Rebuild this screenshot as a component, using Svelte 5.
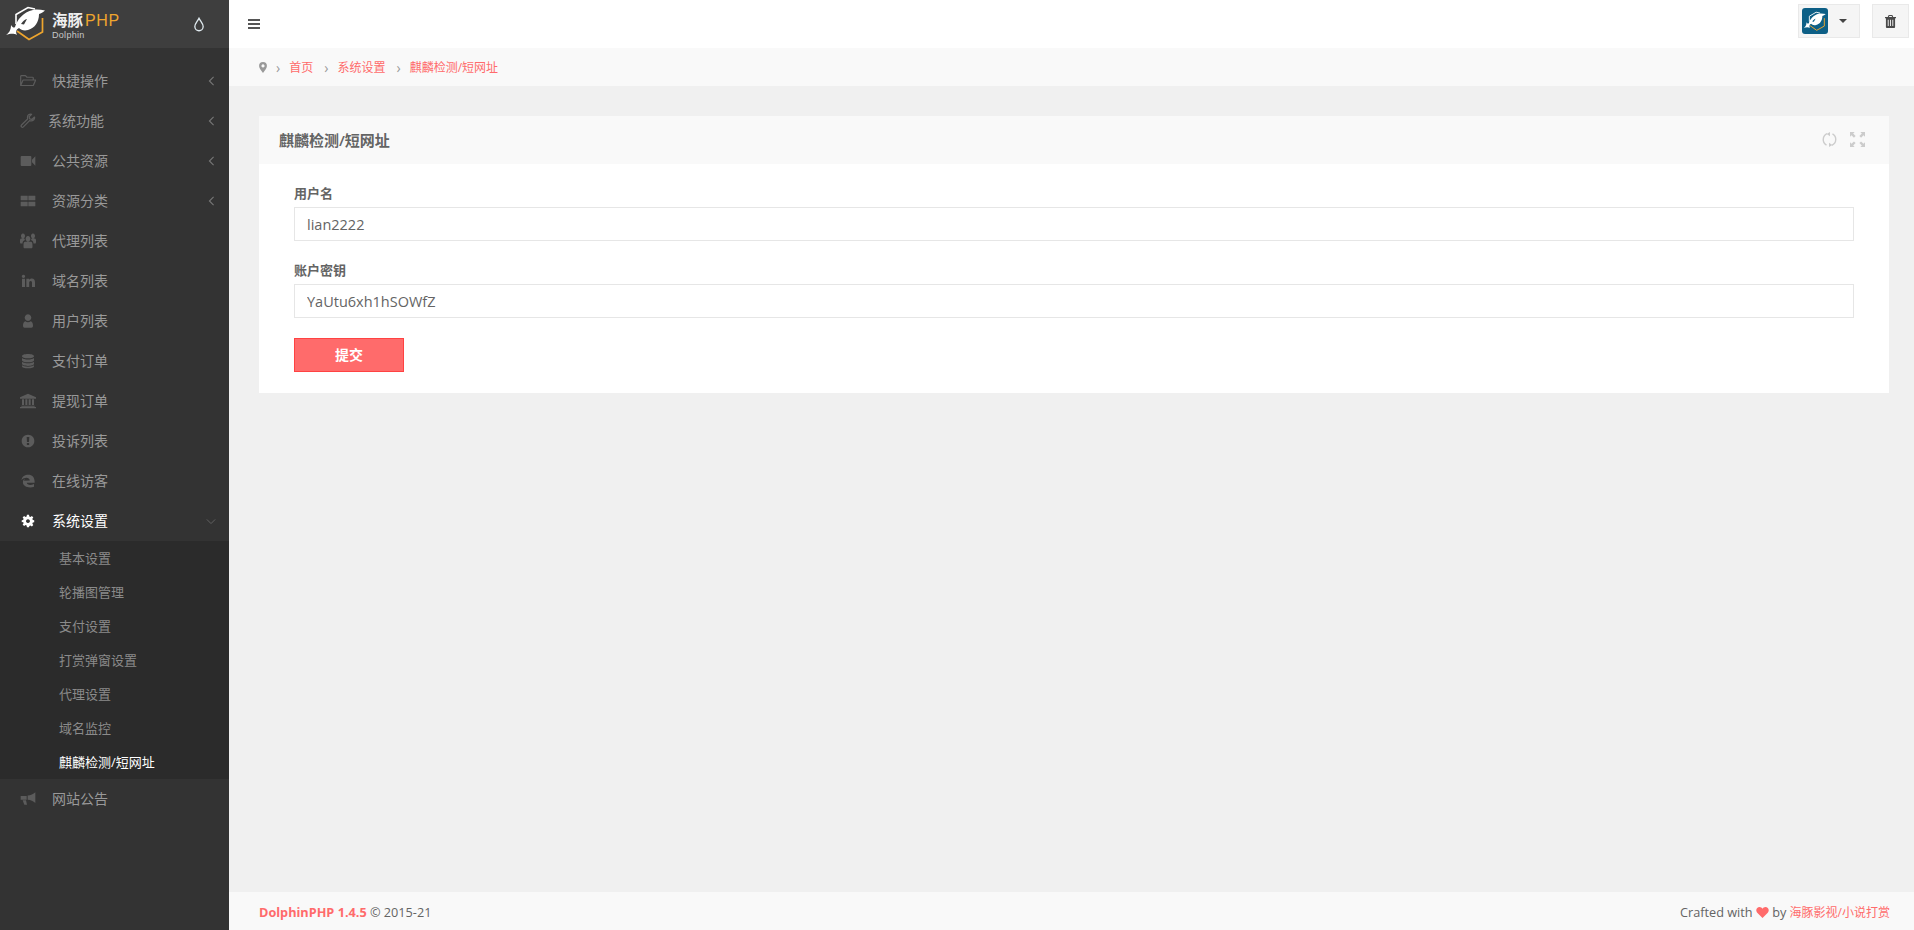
<script>
  const f = 'M3 6.5 a1 1 0 0 1 1-1 h5 l2 2 h7 a1 1 0 0 1 1 1 V11 M3 6.5 V18 l3-7 h16 l-3 7 H3';
  const nav = [
    { t: '快捷操作', i: 'folder', c: 'left' },
    { t: '系统功能', i: 'wrench', c: 'left', tight: true },
    { t: '公共资源', i: 'video', c: 'left' },
    { t: '资源分类', i: 'th', c: 'left' },
    { t: '代理列表', i: 'users' },
    { t: '域名列表', i: 'in' },
    { t: '用户列表', i: 'user' },
    { t: '支付订单', i: 'db' },
    { t: '提现订单', i: 'bank' },
    { t: '投诉列表', i: 'alert' },
    { t: '在线访客', i: 'edge' },
    { t: '系统设置', i: 'cog', c: 'down', active: true },
  ];
  const subs = ['基本设置', '轮播图管理', '支付设置', '打赏弹窗设置', '代理设置', '域名监控', '麒麟检测/短网址'];
</script>

{#snippet dolphin(slit)}
  <path d="M16 24 V14.500 L28 7.500 L35 9" fill="none" stroke="#fff" stroke-width="1.600" />
  <path d="M17 31 L29 39.500 L42.500 32 V18" fill="none" stroke="#eea52e" stroke-width="1.700" />
  <path d="M6 35 C9 33 11 30 11 25 C13 28 14 28 15 27 C17 20 23 12 33 10 C37 9 41 10 45 10.500 C43 12.500 41 13.500 39 14 C39 22 35 28 28 30 C24 31 21 30 19 28 C17 29 15 31 17 35 C13 33 10 34 6 35z" fill="#fff" />
  <path d="M21 24 C23 21 25 19.500 27 19 C26 21 25 22.500 24 24.500z" fill={slit} />
{/snippet}

{#snippet icon(n)}
  <svg class="ic" viewBox="0 0 24 24" width="16" height="16" aria-hidden="true">
    {#if n === 'folder'}
      <path d={f} fill="none" stroke="currentColor" stroke-width="1.500" stroke-linejoin="round" transform="translate(-2.500 -2.500) scale(1.180)" />
    {:else if n === 'wrench'}
      <path d="M21 6.500 l-3.600 3.400 -3-.8 -.8-3 L17 2.700 c-3-1-6.200 1.400-5.600 5 .1.800.3 1.300.1 1.600 L3 17.600 c-1.600 1.700.9 4.200 2.600 2.600 l8.300-8.400 c.4-.3 1-.1 1.800 0 3.600.4 6.200-2.700 5.300-5.300z" fill="none" stroke="currentColor" stroke-width="1.700" stroke-linejoin="round" transform="translate(-1 -1) scale(1.080)" />
    {:else if n === 'video'}
      <path d="M1 6 a1.500 1.500 0 0 1 1.500-1.500 h13 A1.500 1.500 0 0 1 17 6 v12 a1.500 1.500 0 0 1-1.500 1.500 h-13 A1.500 1.500 0 0 1 1 18z M18 10 L23 5 v14 L18 14z" fill="currentColor" />
    {:else if n === 'th'}
      <path d="M1 4 h10.500 v7 H1z M12.500 4 h10.500 v7 h-10.500z M1 13 h10.500 v7 H1z M12.500 13 h10.500 v7 h-10.500z" fill="currentColor" />
    {:else if n === 'users'}
      <path d="M12 6 a3.500 3.500 0 1 1-.01 0z M4.500 3 a3 3 0 1 1-.01 0z M19.500 3 a3 3 0 1 1-.01 0z M7.500 13 h9 c1.500 0 2.200 1.600 2.200 3.500 v3 c0 1-.7 1.500-1.700 1.500 H7 c-1 0-1.700-.5-1.700-1.500 v-3 C5.300 14.600 6 13 7.500 13z M0 11 c0-1 1-1.800 2-1.800 h4.500 l1 1.600 C5.500 11.300 4 12.500 3.700 15 H1.500 C.5 15 0 14.500 0 13.500z M24 11 c0-1-1-1.800-2-1.800 h-4.500 l-1 1.600 c2 .5 3.500 1.700 3.800 4.200 h2.200 c1 0 1.500-.5 1.500-1.500z" fill="currentColor" transform="translate(0 -3) scale(1 1.240)" />
    {:else if n === 'in'}
      <path d="M3 8.500 h4.500 V21 H3z M5.200 2.500 a2.500 2.500 0 1 1-.01 0z M9.500 8.500 h4.200 v1.800 c.8-1.300 2.200-2.200 4-2.200 3.300 0 4.800 2.200 4.800 5.800 V21 H18 v-6.200 c0-1.600-.6-2.800-2-2.800 -1.500 0-2.200 1.200-2.200 2.800 V21 H9.500z" fill="currentColor" />
    {:else if n === 'user'}
      <path d="M12 2 a5 5 0 1 1-.01 0z M8 12.500 c1.100 .9 2.500 1.500 4 1.500 s2.900-.6 4-1.500 c2.300 .4 3.500 3 3.500 6.500 0 1.800-1 3-2.500 3 H7 c-1.500 0-2.500-1.200-2.500-3 0-3.500 1.200-6.100 3.500-6.500z" fill="currentColor" />
    {:else if n === 'db'}
      <path d="M12 1.500 c5 0 9 1.400 9 3.200 s-4 3.300-9 3.300 -9-1.500-9-3.300 4-3.200 9-3.200z M3 7.500 c1.700 1.500 5 2.200 9 2.200 s7.300-.7 9-2.200 v3.200 c0 1.800-4 3.300-9 3.300 s-9-1.500-9-3.300z M3 13.200 c1.700 1.500 5 2.200 9 2.200 s7.300-.7 9-2.200 v3.100 c0 1.800-4 3.200-9 3.200 s-9-1.400-9-3.200z M3 18.500 c1.700 1.400 5 2.200 9 2.200 s7.300-.8 9-2.200 v1.800 c0 1.800-4 2.700-9 2.700 s-9-.9-9-2.700z" fill="currentColor" />
    {:else if n === 'bank'}
      <path d="M12 1 L24 6.500 v2 H0 v-2z M3 9.500 h3 v8.500 H3z M8 9.500 h3 v8.500 H8z M13 9.500 h3 v8.500 h-3z M18 9.500 h3 v8.500 h-3z M2 19 h20 v1.500 H2z M0 21 h24 v2 H0z" fill="currentColor" />
    {:else if n === 'alert'}
      <path fill-rule="evenodd" d="M12 2.500 a9.500 9.500 0 1 1-.01 0z M10 6 h4 l-.5 7.500 h-3z M10.300 15 h3.400 v3 h-3.400z" fill="currentColor" />
    {:else if n === 'edge'}
      <path fill-rule="evenodd" d="M1 10.500 C2 4.500 7 1.500 12.500 1.500 c6.500 0 10.500 4.500 10.500 11 v2.500 H10 c.3 3.800 6.500 5 12 1.800 v4.700 C14 24.500 3.500 21.500 3.500 14 c0-2.500 1.500-5 4-6.200 -1.200 1-1.900 2.200-2 3.700 L15 11 c0-5-8.500-7-14-.5z" fill="currentColor" transform="translate(1.200 1.200) scale(.9)" />
    {:else if n === 'cog'}
      <path fill-rule="evenodd" d="M10 0 h4 l.6 3.300 2.100.9 2.800-1.900 2.800 2.800 -1.900 2.800 .9 2.100 L24 10.600 v3.800 l-2.700.6 -.9 2.100 1.900 2.800 -2.800 2.800 -2.800-1.900 -2.100.9 L14 24 h-4 l-.6-3.200 -2.100-.9 -2.800 1.900 -2.800-2.800 1.900-2.800 -.9-2.100 L0 14.400 v-3.800 l2.700-.6 .9-2.100 -1.900-2.800 2.800-2.800 2.800 1.900 2.100-.9z M12 8.500 a3.800 3.800 0 1 0 .01 0z" fill="currentColor" transform="translate(2.600 2.600) scale(.78)" />
    {:else if n === 'horn'}
      <path d="M23 2 V18 c-3-2.800-7-4.500-11.500-4.900 V6.900 C16 6.500 20 4.800 23 2z M1 7.500 h9 v5.500 H1z M4 14 h5 l1.500 6.500 H6.500z" fill="currentColor" />
    {/if}
  </svg>
{/snippet}

<div class="app">
  <aside class="side">
    <div class="brand">
      <svg class="logo" viewBox="0 0 50 48" width="50" height="48" aria-hidden="true">
        {@render dolphin('#3c3c3c')}
      </svg>
      <div class="word">
        <div class="w1"><span class="hai">海豚</span><span class="php">PHP</span></div>
        <div class="w2">Dolphin</div>
      </div>
      <svg class="drop" viewBox="0 0 14 18" width="12" height="15" aria-hidden="true">
        <path d="M7 1.500 C5 5.500 2 8 2 11.500 a5 5 0 0 0 10 0 C12 8 9 5.500 7 1.500z" fill="none" stroke="#dfe9ee" stroke-width="1.600" />
      </svg>
    </div>
    <nav class="nav">
      {#each nav as n}
        <div class="row" class:active={n.active} class:tight={n.tight}>
          {@render icon(n.i)}
          <span class="lbl">{n.t}</span>
          {#if n.c === 'left'}
            <svg class="chev" viewBox="0 0 8 12" width="7" height="10" aria-hidden="true"><path d="M6.500 1 L1.500 6 L6.500 11" fill="none" stroke="currentColor" stroke-width="1.300" /></svg>
          {:else if n.c === 'down'}
            <svg class="chev dn" viewBox="0 0 12 8" width="10" height="7" aria-hidden="true"><path d="M1 1.500 L6 6.500 L11 1.500" fill="none" stroke="currentColor" stroke-width="1.100" /></svg>
          {/if}
        </div>
      {/each}
      <div class="sub">
        {#each subs as s, i}
          <div class="subrow" class:on={i === subs.length - 1}>{s}</div>
        {/each}
      </div>
      <div class="row">
        {@render icon('horn')}
        <span class="lbl">网站公告</span>
      </div>
    </nav>
  </aside>

  <div class="main">
    <header class="top">
      <svg class="burger" viewBox="0 0 12 10" width="12" height="10" aria-hidden="true">
        <path d="M0 0 h12 v2 H0z M0 4 h12 v2 H0z M0 8 h12 v2 H0z" fill="#555" />
      </svg>
      <div class="tools">
        <div class="tbtn user">
          <span class="avatar">
            <svg viewBox="3 0 46 46" width="26" height="26" aria-hidden="true">
              {@render dolphin('#0d5f86')}
            </svg>
          </span>
          <span class="caret"></span>
        </div>
        <div class="tbtn trash">
          <svg viewBox="0 0 12 14" width="11" height="13" aria-hidden="true">
            <path fill-rule="evenodd" d="M4 0 h4 l1 2 h3 v1.500 h-1 V13 a1 1 0 0 1-1 1 H2 a1 1 0 0 1-1-1 V3.500 H0 V2 h3z M4.800 1 L4.300 2 h3.400 L7.200 1z M3 5 v7 h1 V5z M5.500 5 v7 h1 V5z M8 5 v7 h1 V5z" fill="#4a4a4a" />
          </svg>
        </div>
      </div>
    </header>

    <div class="crumb">
      <svg class="pin" viewBox="0 0 10 14" width="8" height="11" aria-hidden="true">
        <path fill-rule="evenodd" d="M5 0 a5 5 0 0 1 5 5 c0 3-3 6-5 9 C3 11 0 8 0 5 a5 5 0 0 1 5-5z M5 3 a2 2 0 1 0 .01 0z" fill="#999" />
      </svg>
      <span class="sep">›</span><span class="ln">首页</span>
      <span class="sep">›</span><span class="ln">系统设置</span>
      <span class="sep">›</span><span class="ln">麒麟检测/短网址</span>
    </div>

    <div class="content">
      <section class="card">
        <div class="chead">
          <h3>麒麟检测/短网址</h3>
          <div class="opts">
            <svg viewBox="0 0 16 16" width="15" height="15" aria-hidden="true">
              <path d="M5.500 1.800 A6.800 6.800 0 0 0 4.800 14 M10.500 14.200 A6.800 6.800 0 0 0 11.200 2" fill="none" stroke="#ccc" stroke-width="1.500" />
              <path d="M8.500 0 L8.500 4.500 L5 2.200z M7.500 16 L7.500 11.500 L11 13.800z" fill="#ccc" />
            </svg>
            <svg viewBox="0 0 16 16" width="15" height="15" aria-hidden="true">
              <path d="M0 0 h5 L3.400 1.600 6 4.200 4.200 6 1.600 3.400 0 5z M16 0 v5 L14.400 3.400 11.800 6 10 4.200 12.600 1.600 11 0z M0 16 v-5 l1.600 1.600 L4.200 10 6 11.800 3.400 14.400 5 16z M16 16 h-5 l1.600-1.600 L10 11.800 11.800 10 14.400 12.600 16 11z" fill="#ccc" />
            </svg>
          </div>
        </div>
        <form class="cbody">
          <div class="group">
            <label for="u">用户名</label>
            <input id="u" value="lian2222" />
          </div>
          <div class="group">
            <label for="k">账户密钥</label>
            <input id="k" value="YaUtu6xh1hSOWfZ" />
          </div>
          <button type="button">提交</button>
        </form>
      </section>
    </div>

    <footer class="foot">
      <div><a href="#a">DolphinPHP 1.4.5</a> © 2015-21</div>
      <div class="fr">Crafted with
        <svg viewBox="0 0 14 12" width="13" height="11" aria-hidden="true"><path d="M7 12 L1 6 C-1 3 1 0 3.800 0 C5.200 0 6.300 .8 7 2 C7.700 .8 8.800 0 10.200 0 C13 0 15 3 13 6z" fill="#ff6b6b" /></svg>
        by <span class="ln">海豚影视/小说打赏</span></div>
    </footer>
  </div>
</div>

<style>
  :global(body) { margin: 0; background: #f0f0f0; }
  .app {
    display: flex;
    height: 930px;
    overflow: hidden;
    font: 14px/20px "Open Sans", "Noto Sans CJK SC", sans-serif;
    color: #646464;
  }
  .side { width: 229px; flex: none; background: #333; color: #999; }
  .brand {
    height: 48px;
    background: #3e3e3e;
    display: flex;
    align-items: center;
    box-sizing: border-box;
  }
  .logo { flex: none; }
  .word { margin-left: 2px; width: 141px; }
  .w1 { display: flex; align-items: baseline; height: 19px; line-height: 19px; margin-top: 3px; }
  .hai { color: #eee; font-size: 15.500px; font-weight: 700; }
  .php { color: #eea52e; font: 400 16px/19px "Liberation Sans", sans-serif; letter-spacing: .6px; margin-left: 2px; }
  .w2 { color: #c8c8c8; font: 400 9px/10px "Liberation Sans", sans-serif; letter-spacing: .3px; }
  .drop { flex: none; }
  .nav { padding-top: 13px; }
  .row {
    height: 40px;
    display: flex;
    align-items: center;
    padding-left: 20px;
    position: relative;
  }
  .ic { flex: none; color: #5c5c5c; }
  .lbl { margin-left: 16px; }
  .tight .lbl { margin-left: 12px; }
  .chev { position: absolute; right: 14px; top: 15px; color: #777; }
  .chev.dn { right: 13px; top: 17px; color: #666; }
  .active { color: #fff; }
  .active .ic { color: #fff; }
  .sub { background: #2b2b2b; }
  .subrow { height: 34px; line-height: 34px; padding-left: 59px; font-size: 13px; color: #8a8a8a; }
  .subrow.on { color: #fff; }
  .main { flex: 1; min-width: 0; display: flex; flex-direction: column; }
  .top {
    height: 48px;
    background: #fff;
    display: flex;
    align-items: center;
    justify-content: space-between;
    padding: 0 5px 0 19px;
    box-sizing: border-box;
  }
  .burger { margin-top: -1px; }
  .tools { display: flex; gap: 12px; margin-top: -6px; }
  .tbtn {
    height: 34px;
    box-sizing: border-box;
    background: #f5f5f5;
    border: 1px solid #e9e9e9;
    display: flex;
    align-items: center;
  }
  .user { width: 62px; padding-left: 3px; }
  .avatar { width: 26px; height: 26px; border-radius: 3px; background: #0d5f86; display: block; overflow: hidden; }
  .avatar svg { display: block; }
  .caret {
    margin-left: 11px;
    border: 4px solid transparent;
    border-top: 4px solid #444;
    border-bottom: 0;
  }
  .trash { width: 37px; justify-content: center; }
  .crumb {
    height: 38px;
    background: #f9f9f9;
    display: flex;
    align-items: center;
    padding: 1px 0 0 30px;
    font-size: 12px;
    box-sizing: border-box;
  }
  .pin { margin-right: 9px; margin-top: -1px; }
  .sep { color: #999; font-size: 14px; margin-right: 9px; }
  .ln { color: #ff6b6b; margin-right: 11px; }
  .fr .ln { margin-right: 0; font-size: 12px; }
  .content { flex: 1; padding: 30px 25px 0 30px; min-height: 0; }
  .card { background: #fff; }
  .chead {
    height: 48px;
    background: #f9f9f9;
    display: flex;
    align-items: center;
    justify-content: space-between;
    padding: 0 24px 0 20px;
    box-sizing: border-box;
  }
  h3 { margin: 0; font-size: 15px; font-weight: 600; color: #646464; }
  .opts { display: flex; gap: 13px; align-items: center; margin-top: -2px; }
  .cbody { padding: 20px 35px 21px; }
  .group { margin-bottom: 20px; }
  label { display: block; font-size: 13px; font-weight: 600; line-height: 18px; margin-bottom: 5px; color: #646464; }
  input {
    display: block;
    width: 100%;
    height: 34px;
    box-sizing: border-box;
    border: 1px solid #e6e6e6;
    padding: 0 12px;
    font: inherit;
    font-size: 14.500px;
    color: #646464;
    background: #fff;
    outline: 0;
  }
  button {
    display: block;
    width: 110px;
    height: 34px;
    background: #ff6b6b;
    border: 1px solid #ff4242;
    color: #fff;
    font: 600 14px/20px "Open Sans", "Noto Sans CJK SC", sans-serif;
    padding: 0;
  }
  .foot {
    height: 38px;
    background: #f9f9f9;
    display: flex;
    align-items: center;
    justify-content: space-between;
    padding: 2px 24px 0 30px;
    font-size: 12.700px;
    box-sizing: border-box;
  }
  .foot a { color: #ff6b6b; font-weight: 700; text-decoration: none; }
  .fr svg { vertical-align: -1px; }
</style>
